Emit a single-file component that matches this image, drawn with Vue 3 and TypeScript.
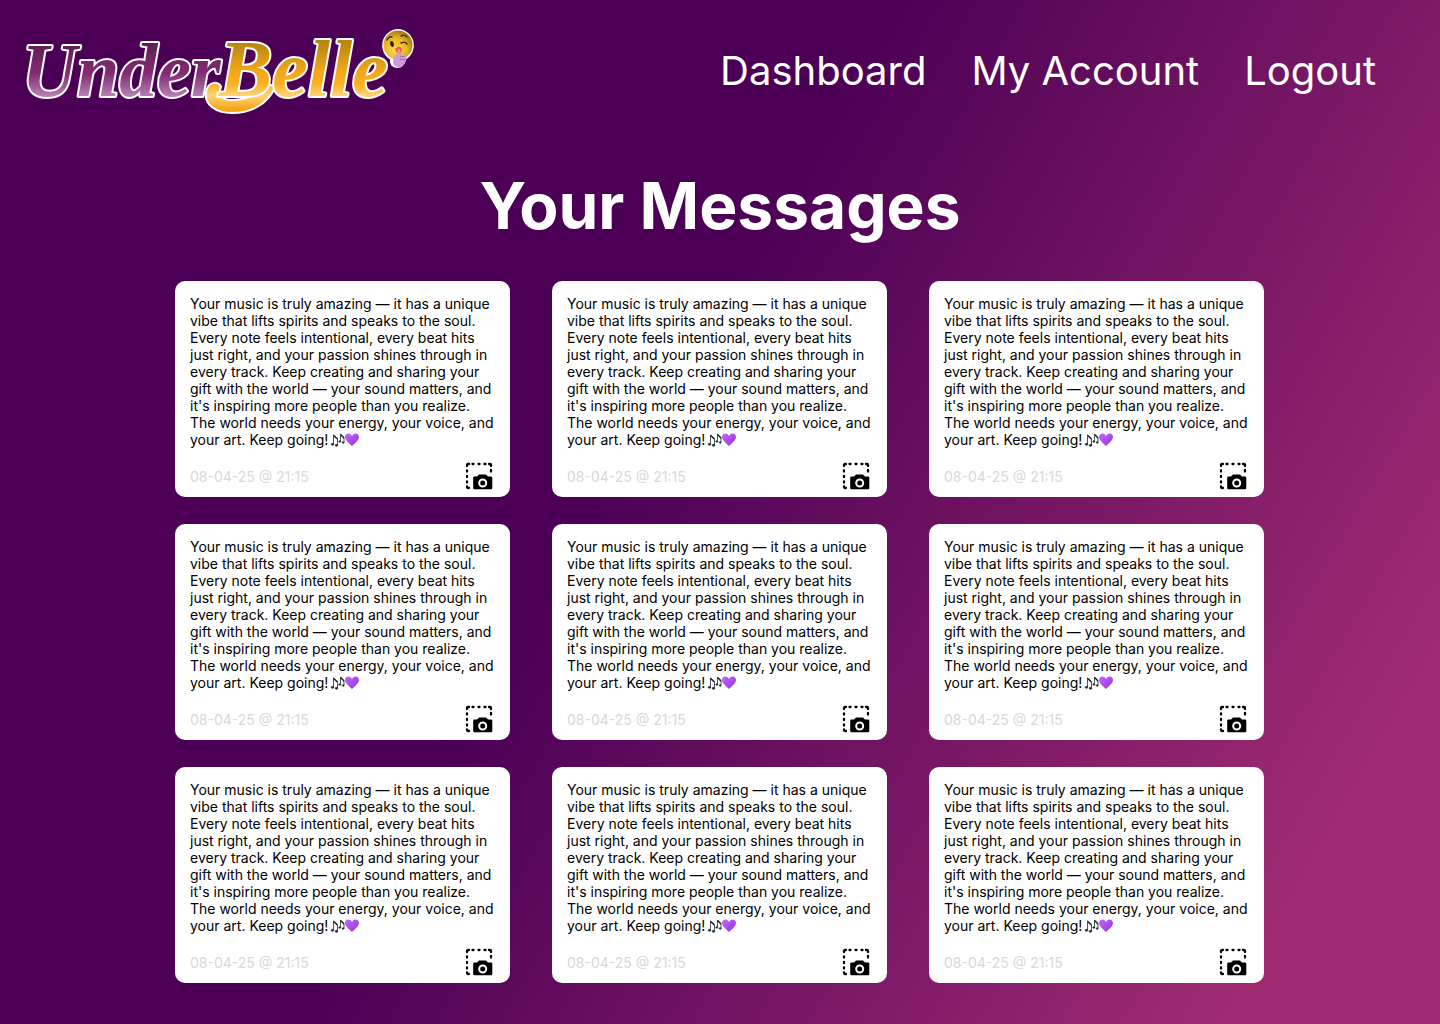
<script setup lang="ts">
interface Message {
  id: number
  body: string
  sentAt: string
}

const links: { label: string; href: string }[] = [
  { label: 'Dashboard', href: '#dashboard' },
  { label: 'My Account', href: '#account' },
  { label: 'Logout', href: '#logout' },
]

const body =
  "Your music is truly amazing — it has a unique vibe that lifts spirits and speaks to the soul. Every note feels intentional, every beat hits just right, and your passion shines through in every track. Keep creating and sharing your gift with the world — your sound matters, and it's inspiring more people than you realize. The world needs your energy, your voice, and your art. Keep going! "

const messages: Message[] = Array.from({ length: 9 }, (_, i) => ({
  id: i + 1,
  body,
  sentAt: '08-04-25 @ 21:15',
}))
</script>

<template>
  <div class="page">
    <header class="header">
      <a class="brand" href="#home" aria-label="UnderBelle">
        <svg class="logo" viewBox="0 0 400 96" aria-hidden="true">
          <defs>
            <linearGradient id="plum" gradientUnits="userSpaceOnUse" x1="0" y1="20" x2="0" y2="76">
              <stop offset="0" stop-color="#5c1f52" />
              <stop offset=".55" stop-color="#852b74" />
              <stop offset=".72" stop-color="#97508f" />
              <stop offset="1" stop-color="#bd8cbc" />
            </linearGradient>
            <linearGradient id="gold" gradientUnits="userSpaceOnUse" x1="0" y1="20" x2="0" y2="86">
              <stop offset="0" stop-color="#b8860f" />
              <stop offset=".45" stop-color="#f4a91c" />
              <stop offset=".62" stop-color="#fbb021" />
              <stop offset=".8" stop-color="#ffd578" />
              <stop offset="1" stop-color="#f3a516" />
            </linearGradient>
            <radialGradient id="face" cx=".4" cy=".65" r=".65">
              <stop offset="0" stop-color="#ffdc4c" />
              <stop offset=".6" stop-color="#e9b624" />
              <stop offset="1" stop-color="#a37d18" />
            </radialGradient>
          </defs>
          <text class="word" x="6" y="73" font-size="76" fill="url(#plum)">Under</text>
          <path class="swash" d="M191 69c2-11 12-9 13-5-4 8 2 15 14 14 15-1 26-6 33-16l7 2c-7 17-24 25-42 25-16 0-27-8-25-20z" fill="url(#gold)" />
          <text class="word" x="203" y="73" font-size="80" fill="url(#gold)">Belle</text>
          <path d="M382 7a15.500 15.500 0 0 1 7 29c-1 5-3 8-8 8-4 0-7-3-6-8a15.500 15.500 0 0 1 7-29z" fill="#fff" stroke="#fff" stroke-width="2" />
          <circle cx="382" cy="22" r="14.500" fill="url(#face)" />
          <ellipse cx="376" cy="21" rx="1.800" ry="3" fill="#35200c" transform="rotate(-10 376 21)" />
          <path d="M371 17q2-4 5-3M385 13q4-2 6 1M385 20q4-2 6 1" fill="none" stroke="#4b300b" stroke-width="1.500" stroke-linecap="round" />
          <path d="M379 26q4-5 7 0l-1 4h-4z" fill="#ef602c" />
          <path d="M382 26q2-1 2 1l1 6 4-1 2 2-2 6q-3 5-7 4-5-1-5-5l1-6 3-1z" fill="#cf9add" />
          <path d="M384 33l5 1M384 36l5 1" stroke="#a06aad" stroke-width="1" />
        </svg>
      </a>
      <nav class="nav" aria-label="Main">
        <a v-for="link in links" :key="link.label" :href="link.href">{{ link.label }}</a>
      </nav>
    </header>

    <main class="main">
      <h1>Your Messages</h1>
      <div class="grid">
        <article v-for="m in messages" :key="m.id" class="card">
          <p class="body">{{ m.body }}<svg class="emoji" viewBox="0 0 30 15" role="img" aria-label="music notes and purple heart"><g fill="#252b33" stroke="#252b33"><path d="M3.500 12V3l4 3.500V13M10.500 9V2l3.500 3.500V10" fill="none" stroke-width=".8" /><path d="M3.500 2.500l4 3.500v2l-4-3.500zM10.500 1.500L14 5v2l-3.500-3.500z" stroke="none" /><ellipse cx="2.500" cy="12.300" rx="1.200" ry=".9" /><ellipse cx="6.500" cy="13.300" rx="1.200" ry=".9" /><ellipse cx="9.800" cy="9.500" rx=".9" ry=".7" /><ellipse cx="13.200" cy="10.500" rx=".9" ry=".7" /></g><defs><linearGradient :id="`heart${m.id}`" x1="0" y1="0" x2="1" y2="1"><stop offset="0" stop-color="#c566fa" /><stop offset="1" stop-color="#9134dc" /></linearGradient></defs><path d="M22 14C19 11 15 8 15 5c0-4 5-5 7-1 2-4 7-3 7 1 0 3-4 6-7 9z" :fill="`url(#heart${m.id})`" /></svg></p>
          <footer class="meta">
            <time>{{ m.sentAt }}</time>
            <button class="shot" type="button" aria-label="Save message as image">
              <svg viewBox="0 0 28 28" aria-hidden="true">
                <path
                  fill="none"
                  stroke="#000"
                  stroke-width="2.300"
                  stroke-linecap="round"
                  stroke-linejoin="round"
                  d="M2 4V3q0-1 1-1h1M7.500 2h1M13.500 2h1M19.500 2h1M24 2h1q1 0 1 1v1M26 8v1.500M2 8.500v1M2 14v1M2 19.500v1M2 24.500V25q0 1 1 1h1"
                />
                <path fill="#000" d="M9.500 14.500H12l2-2h7l2 2h3q1.300 0 1.300 1.300V26q0 1.300-1.300 1.300H9.500q-1.300 0-1.300-1.300V15.800q0-1.300 1.300-1.300z" />
                <circle cx="17.700" cy="21" r="3.500" fill="none" stroke="#fff" stroke-width="2" />
              </svg>
            </button>
          </footer>
        </article>
      </div>
    </main>
  </div>
</template>

<style>
body {
  margin: 0;
}
</style>

<style scoped>
.page {
  min-height: 100vh;
  box-sizing: border-box;
  padding-bottom: 41px;
  background: linear-gradient(120deg, #4b0055 0%, #4b0055 43%, #9e2b72 89%, #9e2b72 100%);
  font-family: Inter, "Liberation Sans", sans-serif;
  color: #fff;
}
.header {
  display: flex;
  align-items: center;
  justify-content: space-between;
  height: 142px;
  padding: 0 64px 0 16px;
}
.brand {
  display: block;
}
.logo {
  display: block;
  width: 400px;
  height: 96px;
  overflow: visible;
}
.word,
.swash {
  stroke: #fff;
  stroke-width: 4px;
  stroke-linejoin: round;
  paint-order: stroke;
}
.word {
  font-family: "Liberation Serif", serif;
  font-weight: 700;
  font-style: italic;
}
.nav {
  display: flex;
  gap: 45px;
  font-size: 40px;
  line-height: 48px;
}
.nav a {
  color: inherit;
  text-decoration: none;
}
.main {
  display: flex;
  flex-direction: column;
  align-items: center;
}
h1 {
  margin: 25px 0 37px;
  font-size: 64px;
  line-height: 77px;
  font-weight: 700;
}
.grid {
  display: grid;
  grid-template-columns: repeat(3, 335px);
  gap: 27px 42px;
  padding-right: 1px;
}
.card {
  box-sizing: border-box;
  min-height: 216px;
  padding: 14px 15px 5px;
  border-radius: 10px;
  background: #fff;
  color: #000;
}
.body {
  margin: 0;
  font-size: 14px;
  line-height: 17px;
}
.emoji {
  width: 30px;
  height: 15px;
  margin-left: -2px;
  vertical-align: -2px;
}
.meta {
  display: flex;
  align-items: center;
  justify-content: space-between;
  margin-top: 12px;
  font-size: 14px;
  line-height: 17px;
  color: #d9d9d9;
}
.shot {
  width: 32px;
  height: 32px;
  padding: 2px;
  border: 0;
  background: none;
  cursor: pointer;
}
.shot svg {
  display: block;
  width: 28px;
  height: 28px;
}
</style>
